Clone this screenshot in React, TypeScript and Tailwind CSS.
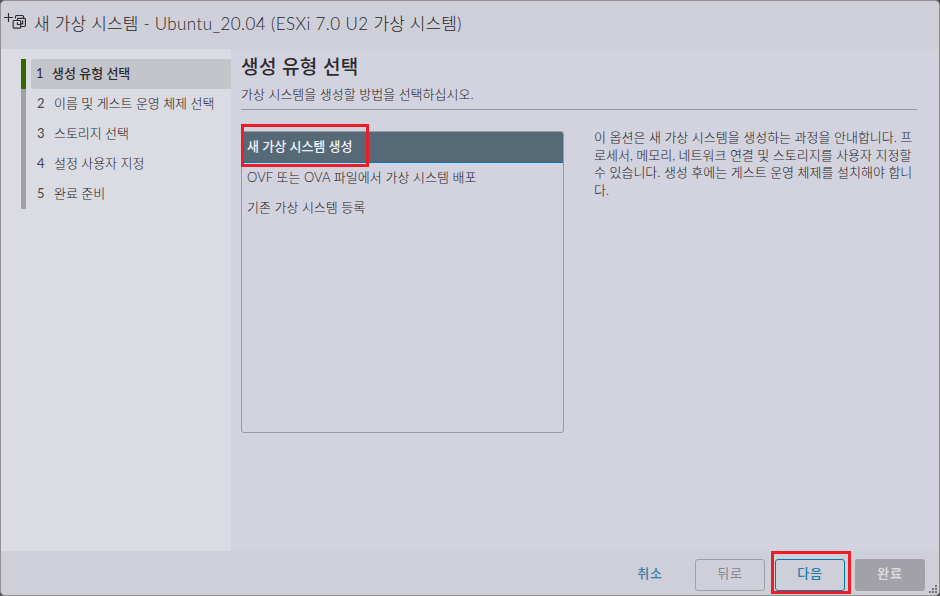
const steps = ['생성 유형 선택', '이름 및 게스트 운영 체제 선택', '스토리지 선택', '설정 사용자 지정', '완료 준비'];

const description = [
  '이 옵션은 새 가상 시스템을 생성하는 과정을 안내합니다. 프',
  '로세서, 메모리, 네트워크 연결 및 스토리지를 사용자 지정할',
  '수 있습니다. 생성 후에는 게스트 운영 체제를 설치해야 합니',
  '다.',
];

function NewVmIcon() {
  return (
    <svg className="h-5 w-6 shrink-0" viewBox="0 0 24 20" fill="none" stroke="#2c2c31" strokeWidth="1.15">
      <path d="M0 6.5H9M4.5 2V11" />
      <rect x="9.1" y="9.5" width="7.6" height="7.6" rx="0.8" />
      <path d="M11.5 7.4V5.5q0-1 1-1h6q1 0 1 1v1.6" />
      <path d="M13.4 9.5V8.3q0-0.9 0.9-0.9h6.2q0.9 0 0.9 0.9v6.3q0 0.9-0.9 0.9h-3.8" />
      <path d="M13.4 11.2v2.3h2.8M18.7 9.2v3.6h-2" />
    </svg>
  );
}

function ResizeGrip() {
  return (
    <svg className="absolute right-[2px] bottom-[2px] h-2 w-2" viewBox="0 0 8 8" fill="#77777b">
      <path d="M6 0h2v2H6zM3 3h2v2H3zM6 3h2v2H6zM0 6h2v2H0zM3 6h2v2H3zM6 6h2v2H6z" />
    </svg>
  );
}

export default function App() {
  return (
    <div className="h-[596px] w-[940px] overflow-hidden bg-[#55555a] font-['Lato','Noto_Sans_CJK_KR',sans-serif] text-[13px] font-light text-[#1c1c20]">
      <div className="relative flex h-full flex-col overflow-hidden rounded-[5px] border border-[#919193] bg-[#cfcfd9]">
        <header className="flex h-12 shrink-0 items-start pt-[10px] pl-[3px]">
          <NewVmIcon />
          <h1 className="mt-px ml-[6px] text-[17px] leading-6 font-light tracking-[0.2px] whitespace-pre text-[#26262a]">
            새 가상 시스템 - <span className="tracking-[0.4px]">Ubuntu_20.04 (ESXi 7.0 U2 </span>
            <span className="tracking-[0.1px]">가상 시스템)</span>
          </h1>
        </header>

        <div className="flex min-h-0 flex-1">
          <nav className="w-[230px] shrink-0 bg-[#dbdbe4] pt-[10px] pl-5">
            <ol>
              {steps.map((step, i) => (
                <li key={step} className="flex h-[30px]">
                  <span className={i === 0 ? 'w-[5px] bg-[#306b00]' : 'w-[5px] bg-[#a1a1a5]'} />
                  <span
                    className={
                      i === 0
                        ? 'ml-[5px] flex flex-1 items-center rounded-l-[3px] bg-[#c4c4cb] pl-[5px] font-medium text-[#2b2b2e]'
                        : 'ml-[5px] flex flex-1 items-center pl-[6px]'
                    }
                  >
                    <span className={i === 0 ? 'w-4 font-normal' : 'w-[17px] font-normal text-[#47474b]'}>{i + 1}</span>
                    <span className={i === 0 ? 'whitespace-nowrap' : 'tracking-[-0.05px] whitespace-nowrap'}>{step}</span>
                  </span>
                </li>
              ))}
            </ol>
          </nav>

          <main className="flex-1 bg-[#d3d3df] pr-[22px] pl-[10px]">
            <h2 className="pt-[6px] text-[19px] leading-6 font-medium tracking-[0.4px] text-[#2b2b2e]">생성 유형 선택</h2>
            <p className="mt-[6px] h-[25px] border-b border-[#9999a4] leading-[19px]">가상 시스템을 생성할 방법을 선택하십시오.</p>
            <div className="mt-[21px] flex">
              <div className="relative h-[302px] w-[323px] rounded-[3px] border border-[#9a9aa4]">
                <div className="flex h-[31px] items-center rounded-t-[2px] border-b border-[#0079b0] bg-[#566976] pl-[5px] font-medium text-[#f2f2f6]">
                  새 가상 시스템 생성
                </div>
                <div className="flex h-[30px] items-center pl-[5px]">
                  <span className="tracking-[0.05px]">OVF 또는 OVA 파일에서 가상 시스템 배포</span>
                </div>
                <div className="flex h-[30px] items-center pl-[5px]">기존 가상 시스템 등록</div>
                <div className="absolute -top-2 -left-px h-[43px] w-[128px] border-[3px] border-[#ee1c25]" />
              </div>
              <div className="-mt-[2px] ml-[30px] leading-[17.5px] whitespace-nowrap">
                {description.map((line) => (
                  <p key={line}>{line}</p>
                ))}
              </div>
            </div>
          </main>
        </div>

        <footer className="flex h-[44px] shrink-0 items-start justify-end gap-[10px] pt-[8px] pr-[14px] font-medium">
          <button className="h-8 w-[70px] pb-[3px] tracking-[0.8px] text-[#347fa7]">취소</button>
          <button className="h-8 w-[70px] rounded-[3px] border border-[#a0a0a7] pb-[3px] font-normal tracking-[0.8px] text-[#85858c]">
            뒤로
          </button>
          <div className="relative h-8 w-[70px]">
            <button className="h-8 w-[70px] rounded-[3px] border border-[#0079ad] pb-[3px] tracking-[0.8px] text-[#207da8]">
              다음
            </button>
            <div className="absolute -top-2 -left-1 h-[43px] w-20 border-[3px] border-[#ee1c25]" />
          </div>
          <button className="h-8 w-[70px] rounded-[3px] bg-[#a1a1a7] pb-[3px] font-bold tracking-[0.8px] text-[#d9d9df]">완료</button>
        </footer>
        <ResizeGrip />
      </div>
    </div>
  );
}
